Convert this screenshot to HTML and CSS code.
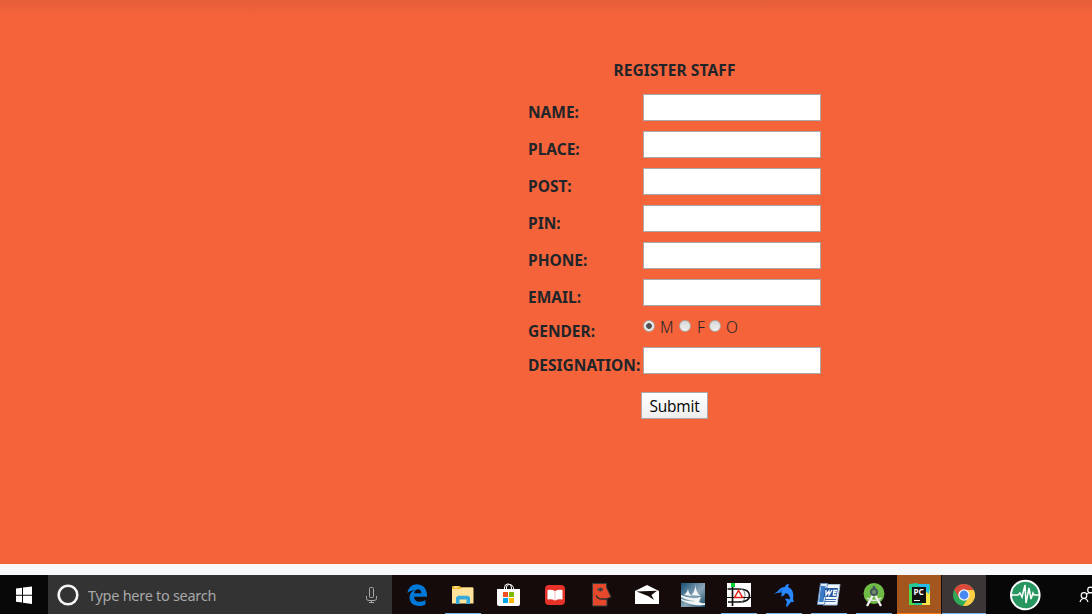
FILE: index.html
```html
<!DOCTYPE html>
<html lang="en">
<head>
<meta charset="utf-8">
<title>Register Staff</title>
<link rel="stylesheet" href="styles.css">
</head>
<body>
<main class="page">
  <form class="staff-form">
    <h1 class="title">REGISTER STAFF</h1>
    <div class="row"><label>NAME:</label><input class="field" type="text"></div>
    <div class="row"><label>PLACE:</label><input class="field" type="text"></div>
    <div class="row"><label>POST:</label><input class="field" type="text"></div>
    <div class="row"><label>PIN:</label><input class="field" type="text"></div>
    <div class="row"><label>PHONE:</label><input class="field" type="text"></div>
    <div class="row"><label>EMAIL:</label><input class="field" type="text"></div>
    <div class="row gender"><label>GENDER:</label>
      <div class="options"><i class="radio checked"></i><span class="opt-m">M</span><i class="radio"></i><span class="opt-f">F</span><i class="radio"></i><span class="opt-o">O</span></div>
    </div>
    <div class="row"><label>DESIGNATION:</label><input class="field" type="text"></div>
    <button class="submit" type="button">Submit</button>
  </form>
</main>
<div class="strip"></div>
<footer class="taskbar">
  <div class="start"><svg width="48" height="39"><path fill="#fff" d="M16 13.500l6-.8v7H16zM23 12.600l9-1.200v8.300h-9zM16 20.700h6v6.900l-6-.8zM23 20.700h9v8.300l-9-1.200z"/></svg></div>
  <div class="search">
    <svg width="40" height="39"><circle cx="20" cy="20" r="9.300" fill="none" stroke="#f4f4f4" stroke-width="2.600"/></svg>
    <span class="search-text">Type here to search</span>
    <svg class="mic" width="16" height="39" fill="none" stroke="#a8a8a8"><rect x="6.500" y="12.500" width="4" height="10" rx="1"/><path d="M3.500 21v2.500q0 2 2.500 2h5q2.500 0 2.500-2V21M8.500 25.500v2M6 27.500h5"/></svg>
  </div>
  <div class="apps">
    <div class="app"><svg viewBox="0 0 46 39"><path fill="#0078d7" d="M13.500 18C14.500 6 32.500 6 33 19.500v2.300H20c.3 6.200 7.800 5.800 11.500 3.300v4.300c-8 4-16 .4-16-6.800 0-3.800 2.200-6.200 5.300-7.500-3.300.6-5.800 1.700-7.300 2.900zM20.200 18.300h7.200c-.1-5.500-6.500-5.200-7.200 0z"/></svg></div>
    <div class="app open"><svg viewBox="0 0 46 39"><path fill="#f0b92d" d="M12 12q0-1 1-1h7l1 1.500h12V17H12z"/><path fill="#ffe39a" d="M12 14h8l1.500-1.500h11q1 0 1 1V28.500H12z"/><path fill="#36a9dc" d="M16 29v-6.500l1.800-1.700h10.400l1.800 1.700V29h-3.500v-4.500h-7V29z"/><path fill="#fff6cf" d="M14 11.500h4v1h-4z"/></svg></div>
    <div class="app"><svg viewBox="0 0 46 39"><path fill="none" stroke="#fff" d="M18.500 15v-2q0-4 3-4h1q3 0 3 4v2M20.500 15v-3q0-2.500 3-2.500t4 3V15"/><path fill="#fff" d="M11 14h23v15q0 2-2 2H13q-2 0-2-2z"/><path fill="#f25022" d="M17 17h5v5h-5z"/><path fill="#7fba00" d="M23 17h5v5h-5z"/><path fill="#00a4ef" d="M17 23h5v5h-5z"/><path fill="#ffb900" d="M23 23h5v5h-5z"/></svg></div>
    <div class="app"><svg viewBox="0 0 46 39"><rect x="13" y="10" width="20" height="20" rx="4" fill="#e63229"/><path fill="#fff" d="M15.500 15q4-1 7.500 1 3.500-2 7.500-1v9.500q-4-1-7.500 1-3.500-2-7.500-1z"/><path stroke="#f0bab5" d="M23 16v9.500"/></svg></div>
    <div class="app"><svg viewBox="0 0 46 39"><path fill="#e5482a" stroke="#353c3e" d="M14.500 8.500h14v4l4.500 9.500-4 1.500v7.500H14.500z"/><path fill="none" stroke="#292c2e" stroke-width="1.300" d="M18 20.500q1.500 3.500 6 3.500h5"/><path fill="#8b9296" stroke="#333" d="M19.500 14.500q3-3 5.500 0-2.500 3-5.500 0z"/><circle cx="22.500" cy="14.500" r="1" fill="#222"/></svg></div>
    <div class="app"><svg viewBox="0 0 46 39"><path fill="#fff" d="M11 16l12-6 12 6v13H11z"/><path fill="#160c0b" d="M12.500 16.500L33 15.700 27.500 20l2.500 5-6-4z"/></svg></div>
    <div class="app"><svg viewBox="0 0 46 39"><defs><linearGradient id="sea" x2="1" y2="1"><stop stop-color="#174f76"/><stop offset=".55" stop-color="#8ba7b8"/><stop offset="1" stop-color="#174763"/></linearGradient></defs><path fill="url(#sea)" d="M11 8h24v24H11z"/><path fill="#f2f5f5" d="M25.500 9q0 8 5 12l-9-1q4-4 4-11zM18 13q0 5 4 8l-8-1q4-3 4-7zM11 20q10 5 20 2l-2 5q4 2 6 1v2q-12 2-24-5v-1q7 3 14 2-9-1-14-4z"/></svg></div>
    <div class="app narrow open"><svg viewBox="0 0 46 39"><path fill="#fff" d="M11 8h24v24H11z"/><path fill="none" stroke="#111" stroke-width="1.700" d="M16.500 12v19M11.500 14h11q11 0 11 6.500t-11 6.500H12"/><path fill="none" stroke="#777" d="M25 14q4 1 4 6.500T25 27"/><path fill="none" stroke="#e22018" stroke-width="1.500" d="M18.500 22.500l4-7 4 7zM18 22.500h10"/><path stroke="#111" d="M11 22.500h7M27 22.500h8"/><path fill="#00d42f" d="M15 8h4v4h-4z"/></svg></div>
    <div class="app narrow open"><svg viewBox="0 0 46 39"><path fill="#2687ff" d="M12.500 19c2-1 3-2 4.500-3 2-3 4-4 7-4 0-1 1-3 4-3l-1 3c5 2 6 7 5 12l1 3-3 0-4 5-1-1 1-4-2-3 2-.5 3 1q0-5-4-6.500l-3 3-2 .5 1-4q-4-.5-8.500 1.500z"/><circle cx="20" cy="16" r=".7" fill="#064685"/></svg></div>
    <div class="app narrow open"><svg viewBox="0 0 46 39"><path fill="#f3f7fb" stroke="#a4bddd" d="M19 9.500h15l-3 20.500H17z"/><path fill="#dfecf8" stroke="#648fbe" d="M14.500 8.500h7l-3 21h-7z"/><path fill="#397bc6" d="M15 11h4.500l-2 16H13z"/><path fill="#2459a3" d="M19 13h13l-1.500 9h-13z"/><path fill="none" stroke="#fff" stroke-width="1.300" d="M20 15l0 5 3-4v4l3-5M31 15.500h-3l-.7 4.500h3M28 17.500h2.500"/><path stroke="#3e6eab" d="M19 24.500h11M18.500 26.500h11"/></svg></div>
    <div class="app studio open"><svg viewBox="0 0 46 39"><circle cx="23" cy="18.500" r="10.500" fill="#70ba46"/><path fill="none" stroke="#f4f4f4" stroke-width="2.300" d="M22.500 19l-6.500 12M23.500 19l6.500 12"/><path fill="none" stroke="#e5e5e5" stroke-width="1.400" d="M16 23q7 5 14 0"/><circle cx="23" cy="17" r="3" fill="#76906d" stroke="#46545b" stroke-width="2"/><path stroke="#46545b" stroke-width="2.500" d="M23 11v4"/></svg></div>
    <div class="app pycharm"><svg viewBox="0 0 46 39"><path fill="#24c998" d="M13 9l8-1 6 5 7-4v10l-3 11H13z"/><path fill="#f5e546" d="M27 12l7 4v14h-8z"/><path fill="#23bce9" d="M21 9h12v10z"/><path fill="#57d849" d="M13 13l5 5v12h-5z"/><path fill="#111" d="M16 12h14v16H16z"/><text class="pc" x="17.500" y="20">PC</text><path fill="#fff" d="M18 25h6v1h-6z"/></svg></div>
    <div class="app chrome"><svg viewBox="0 0 46 39"><circle cx="23" cy="20" r="11" fill="#2eaa58"/><path fill="#db493b" d="M13.300 14.500A11 11 0 0 1 32.700 15H23l-5 8z"/><path fill="#fdcd43" d="M32.700 15A11 11 0 0 1 22 31l5.500-8.500L23 15z"/><circle cx="23" cy="20" r="5.700" fill="#f3f4f5"/><circle cx="23" cy="20" r="4.400" fill="#4688f1"/></svg></div>
  </div>
  <div class="tray">
    <svg width="106" height="39"><circle cx="39.300" cy="20" r="14.300" fill="#279660" stroke="#fff" stroke-width="2"/><path fill="none" stroke="#fff" stroke-width="1.500" d="M25 20h7l2-2 2 4 3-12 1 18 3-15 2 11 2-6 1 2h6"/><g fill="none" stroke="#fff" stroke-width="1.200"><circle cx="98" cy="20.500" r="2.800"/><path d="M94 27q1-3.500 4-3.500t4 3.500M101 19q1-1.500 5-1.500"/><circle cx="104.500" cy="15" r="2.800"/></g></svg>
  </div>
</footer>
</body>
</html>
```
FILE: styles.css
```css
* { box-sizing: border-box; }
body { margin: 0; width: 1092px; height: 614px; overflow: hidden; background: #f8f9fa; font-family: "Noto Sans", "Open Sans", sans-serif; color: #212529; }
.page { height: 564px; padding: 60px 0 0 528px; background: linear-gradient(#e35d38, #f5633a 15px); }
.staff-form { width: 293px; }
.title { margin: 0; height: 29px; text-align: center; font-size: 15.500px; line-height: 20px; font-weight: 700; white-space: nowrap; letter-spacing: .1px; }
.row { display: grid; grid-template-columns: 115px 178px; height: 37px; padding-top: 5px; }
label { padding-top: 9px; font-size: 15.500px; line-height: 19px; font-weight: 700; letter-spacing: 0; white-space: nowrap; }
.field { width: 178px; height: 27px; margin: 0; padding: 1px; border: 1px solid #a9a9a9; background: #fff; border-radius: 0; }
.gender { height: 31px; }
.gender label { padding-top: 6px; }
.options { display: flex; align-items: flex-start; padding-top: 4px; font-size: 15.500px; font-weight: 300; line-height: 15px; }
.radio { width: 12px; height: 12px; border: 1px solid #b1a6a1; border-radius: 50%; background: linear-gradient(#d9d9d9, #eeeeee); }
.checked { background: radial-gradient(circle, #505050 0 2.500px, #e8e8e8 3.200px); }
.opt-m { width: 24px; padding-left: 5px; }
.opt-f { width: 18px; padding-left: 6px; }
.opt-o { padding-left: 5px; }
.submit { display: block; width: 67px; height: 27px; margin: 13px 0 0 113px; padding: 1px 0 0; border: 1px solid #a9a9a9; border-radius: 0; background: linear-gradient(#fff, #eee); font-family: "Open Sans", sans-serif; font-size: 15.500px; line-height: 24px; letter-spacing: -.2px; color: #000; }
.strip { height: 11px; }
.taskbar { display: flex; height: 39px; background: #150b0a; }
.start { width: 48px; background: #080808; }
.search { display: flex; width: 344px; background: #333; color: #a8a8a8; }
.search-text { width: 275px; font-size: 14.500px; line-height: 40px; white-space: nowrap; letter-spacing: -.28px; }
.apps { display: flex; width: 594px; padding-left: 2px; }
.app { display: flex; flex: 0 0 46px; min-width: 0; justify-content: center; position: relative; }
.app svg { display: block; flex: none; width: 46px; height: 39px; }
.app.narrow { flex-basis: 45px; }
.app.studio { flex-basis: 46px; }
.open::after { content: ""; position: absolute; left: 5px; bottom: 0; width: 36px; height: 1px; background: #79b6e7; }
.app.pycharm { flex-basis: 44px; background: #a3571f; border-bottom: 1px solid #ff780b; }
.app.chrome { flex-basis: 44px; margin-left: 1px; background: #3c3736; border-bottom: 1px solid #72b5f0; }
.pc { fill: #fff; font: 700 8px "Noto Sans", sans-serif; }
.tray { width: 106px; background: #070707; }
```
